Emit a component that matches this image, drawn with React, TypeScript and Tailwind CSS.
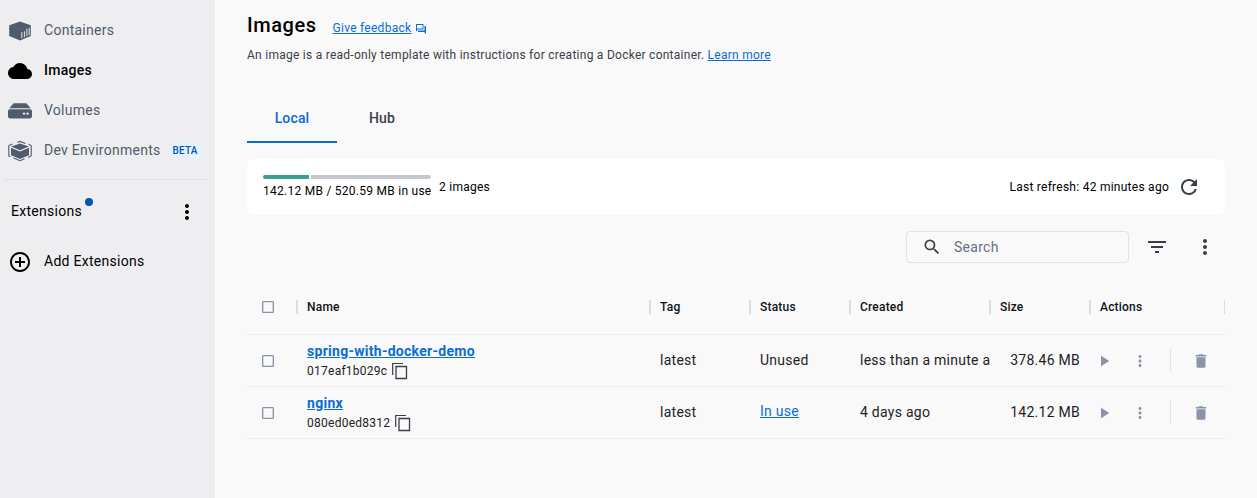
import type { ReactNode } from 'react';
import {
  MdAddCircleOutline,
  MdCheckBoxOutlineBlank,
  MdCloud,
  MdDelete,
  MdFilterList,
  MdMoreVert,
  MdOutlineQuestionAnswer,
  MdPlayArrow,
  MdRefresh,
  MdSearch,
} from 'react-icons/md';

function ContainersIcon() {
  return (
    <svg width="24" height="24" viewBox="0 0 24 24" fill="none">
      <path d="M12 2.600 22.800 6.300V17L12 21.400 1.200 17V6.300Z" fill="#505b6c" />
      <path d="M1.600 6.800 12 10.400 22.400 6.800" stroke="#657082" strokeWidth=".5" />
      <path d="M13.800 13.200v6M16.400 12.300v5.900M18.900 9.800v7.200M21.200 9v7.200" stroke="#e6e8ec" strokeWidth="1" />
    </svg>
  );
}

function VolumesIcon() {
  return (
    <svg width="24" height="24" viewBox="0 0 24 24">
      <path d="M6.6 4.200h10.800c.6 0 1 .1 1.400.5l3.900 4.500H1.300l3.900-4.500c.4-.4.8-.5 1.400-.5Z" fill="#505b6c" />
      <path d="M2 10.300h20c1.1 0 2 .8 2 1.900V17c0 1.400-.9 2.500-2.200 2.500H2.200C.9 19.500 0 18.400 0 17v-4.800c0-1.100.9-1.900 2-1.900Z" fill="#505b6c" />
      <circle cx="16" cy="14.600" r="1.200" fill="#eeeef1" />
      <circle cx="19.500" cy="14.600" r="1.200" fill="#eeeef1" />
    </svg>
  );
}

function DevIcon() {
  return (
    <svg width="24" height="24" viewBox="0 0 24 24" fill="none">
      <path d="M12 4.500 20.800 7.600 12 11.300 3.200 7.600Z" fill="#505b6c" />
      <path d="M3 8.700 12 12.400 21 8.700v7.600L12 19.900 3 16.300Z" fill="#505b6c" />
      <path
        d="M9.300 3.200 12 2.400 17.500 4.400M4.500 5 .8 6.500V16.800l1.700.9M20.500 5.300 23.200 6.500V16.800l-3 1.700M5.500 19 12 21.700l4.500-1.900"
        stroke="#505b6c"
        strokeWidth="1.100"
      />
    </svg>
  );
}

function CopyIcon() {
  return (
    <svg width="18" height="18" viewBox="0 0 18 18" fill="none" stroke="#393f49" className="ml-1">
      <path d="M1.700 13V1.500H12" strokeWidth="1.200" />
      <path d="M5 4.500h10.500v12H5Z" strokeWidth="1.300" />
    </svg>
  );
}

function NavItem({ icon, label, active, badge }: { icon: ReactNode; label: string; active?: boolean; badge?: string }) {
  return (
    <li className="flex h-10 items-center pl-2">
      <span className={active ? 'mt-0.5 text-black' : 'mt-0.5 text-[#505b6c]'}>{icon}</span>
      <span
        className={
          active
            ? 'ml-3 text-sm font-medium tracking-[0.25px] text-black'
            : 'ml-3 text-sm tracking-[0.27px] text-[#505b6c]'
        }
      >
        {label}
      </span>
      {badge && (
        <span className="ml-2 flex h-4 items-center rounded bg-[#e5f2fc] px-1 text-[10px] font-medium tracking-[0.2px] text-[#0055bd]">
          {badge}
        </span>
      )}
    </li>
  );
}

function Sidebar() {
  return (
    <aside className="w-[215px] shrink-0 bg-[#eeeef1] pt-[10px] text-black">
      <ul>
        <NavItem icon={<ContainersIcon />} label="Containers" />
        <NavItem icon={<MdCloud size={24} />} label="Images" active />
        <NavItem icon={<VolumesIcon />} label="Volumes" />
        <NavItem icon={<DevIcon />} label="Dev Environments" badge="BETA" />
      </ul>
      <hr className="mt-[9px] mr-2 ml-[3px] border-[#e1e2e6]" />
      <div className="mt-[11px] flex h-10 items-center pr-4 pl-[11px]">
        <span className="text-sm tracking-[0.27px]">Extensions</span>
        <span className="mb-[18px] ml-[3px] size-2 rounded-full bg-[#0055bd]" />
        <MdMoreVert size={24} className="mt-0.5 ml-auto" />
      </div>
      <div className="mt-[10px] flex h-10 items-center pl-2">
        <MdAddCircleOutline size={24} className="mt-0.5" />
        <span className="ml-3 text-sm tracking-[0.27px]">Add Extensions</span>
      </div>
    </aside>
  );
}

const columns = ['Name', 'Tag', 'Status', 'Created', 'Size', 'Actions'];

const images = [
  { name: 'spring-with-docker-demo', id: '017eaf1b029c', status: 'Unused', created: 'less than a minute a', size: '378.46 MB' },
  { name: 'nginx', id: '080ed0ed8312', status: 'In use', created: '4 days ago', size: '142.12 MB' },
];

const grid = 'grid grid-cols-[50px_353px_100px_100px_140px_100px_135px] border-b border-[#ececee]';

function ImageTable() {
  return (
    <div className="mt-4 w-[978px] overflow-hidden">
      <div className={`${grid} h-14 items-center`}>
        <MdCheckBoxOutlineBlank size={16} className="ml-[13px] text-[#8993a9]" />
        {columns.map((c) => (
          <div key={c} className="-ml-px flex h-3.5 items-center border-l-2 border-[#dddddf] pl-[9px] text-xs font-medium tracking-[0.2px] text-[#101214]">
            {c}
            {c === 'Actions' && <span className="ml-auto h-3.5 w-px bg-[#dddddf]" />}
          </div>
        ))}
      </div>
      {images.map((img) => (
        <div key={img.id} className={`${grid} h-[52px] items-center text-sm tracking-[0.26px] text-[#1f2124]`}>
          <MdCheckBoxOutlineBlank size={16} className="mt-px ml-[13px] text-[#8993a9]" />
          <div className="pl-[10px]">
            <a className="-mt-px mb-px block h-5 w-fit text-sm leading-5 font-bold tracking-[0.28px] text-[#086dd7] underline">{img.name}</a>
            <div className="flex h-[18px] items-center">
              <span className="text-xs tracking-[0.26px]">{img.id}</span>
              <CopyIcon />
            </div>
          </div>
          <span className="mb-0.5 pl-[10px]">latest</span>
          {img.status === 'In use' ? (
            <a className="mb-1 pl-[10px] text-[#086dd7] underline">{img.status}</a>
          ) : (
            <span className="mb-0.5 pl-[10px]">{img.status}</span>
          )}
          <span className="mb-0.5 pl-[10px] whitespace-nowrap">{img.created}</span>
          <span className="mb-0.5 pr-[10px] text-right">{img.size}</span>
          <div className="flex items-center pl-[5px] text-[#8993a9]">
            <MdPlayArrow size={18} />
            <MdMoreVert size={18} className="ml-[18px]" />
            <span className="mb-0.5 ml-[21px] h-6 w-px bg-[#e5e6e9]" />
            <MdDelete size={18} className="ml-[21px]" />
          </div>
        </div>
      ))}
    </div>
  );
}

export default function App() {
  return (
    <div className="flex h-[498px] w-[1257px] overflow-hidden bg-[#f9f9f9] font-[Roboto,sans-serif]">
      <Sidebar />
      <main className="flex-1 pl-8">
        <header className="flex h-[50px] items-center">
          <h1 className="text-xl font-medium tracking-[0.55px] text-black">Images</h1>
          <a className="mt-[5px] ml-4 text-xs tracking-[0.27px] text-[#086dd7] underline">Give feedback</a>
          <MdOutlineQuestionAnswer size={12} className="mt-2 ml-1 text-[#086dd7]" />
        </header>
        <p className="-mt-1 h-[18px] text-xs leading-[18px] tracking-[0.26px] text-[#3a4048]">
          An image is a read-only template with instructions for creating a Docker container.{' '}
          <a className="text-[#086dd7] underline">Learn more</a>
        </p>
        <nav className="mt-[29px] flex h-[50px] text-sm font-medium tracking-[0.15px]">
          <span className="flex w-[90px] items-center justify-center border-b-2 border-[#086dd7] pt-0.5 text-[#086dd7]">Local</span>
          <span className="flex w-[90px] items-center justify-center border-b-2 border-transparent pt-0.5 text-[#393f49]">Hub</span>
        </nav>
        <section className="mt-4 flex h-14 w-[978px] items-center rounded-lg bg-white pr-6 pl-4 text-xs tracking-[0.26px] text-black">
          <div className="w-[168px]">
            <div className="flex h-1 gap-0.5">
              <span className="w-[46px] rounded-l-sm bg-[#3aa08f]" />
              <span className="flex-1 rounded-r-sm bg-[#c4c8d1]" />
            </div>
            <div className="mt-1 whitespace-nowrap">142.12 MB / 520.59 MB in use</div>
          </div>
          <span className="ml-2">2 images</span>
          <span className="ml-auto">Last refresh: 42 minutes ago</span>
          <MdRefresh size={24} className="ml-2 text-[#393f49]" />
        </section>
        <div className="mt-4 flex h-8 w-[978px] items-center justify-end text-[#393f49]">
          <div className="flex h-8 w-[223px] items-center rounded border border-[#e1e2e6] pl-[15px]">
            <MdSearch size={20} />
            <span className="ml-3 text-sm tracking-[0.27px] text-[#677285]">Search</span>
          </div>
          <MdFilterList size={24} className="ml-4" />
          <MdMoreVert size={24} className="mr-2 ml-6" />
        </div>
        <ImageTable />
      </main>
    </div>
  );
}
